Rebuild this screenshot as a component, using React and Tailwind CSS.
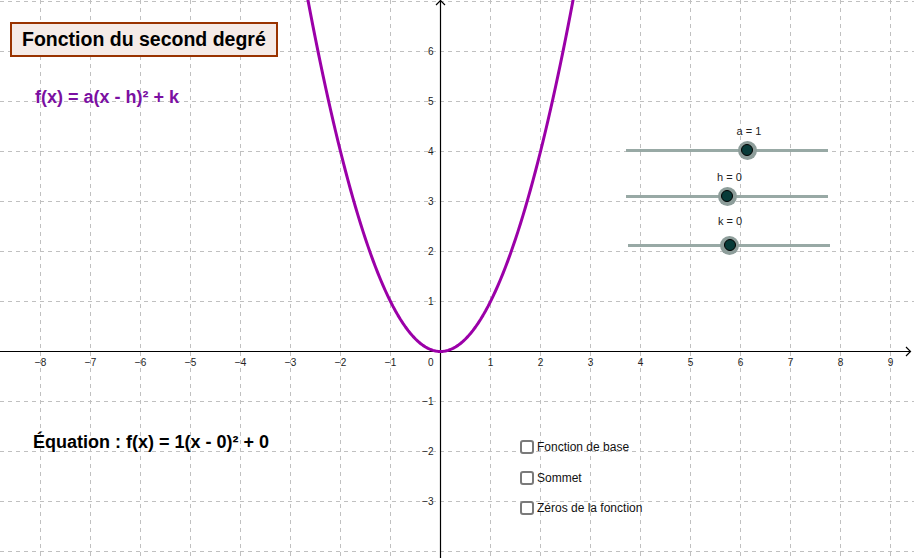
import React from "react";

const W = 914;
const H = 558;
const OX = 440.5;
const OY = 351.5;
const U = 50;

function curvePath() {
  const pts = [];
  for (let i = -56; i <= 56; i++) {
    const x = i * 0.05;
    const px = OX + U * x;
    const py = OY - U * x * x;
    pts.push(`${i === -56 ? "M" : "L"}${px.toFixed(2)},${py.toFixed(2)}`);
  }
  return pts.join(" ");
}

function Graph() {
  const vx = [];
  for (let k = -8; k <= 9; k++) if (k !== 0) vx.push(k);
  const hy = [];
  for (let k = -4; k <= 7; k++) if (k !== 0) hy.push(k);
  return (
    <svg
      width={W}
      height={H}
      viewBox={`0 0 ${W} ${H}`}
      className="absolute inset-0"
    >
      <g stroke="#c0c0c0" strokeWidth="1" strokeDasharray="4 4">
        {vx.map((k) => (
          <line key={"v" + k} x1={OX + U * k} y1="0" x2={OX + U * k} y2={H} />
        ))}
        {hy.map((k) => (
          <line key={"h" + k} x1="0" y1={OY - U * k} x2={W} y2={OY - U * k} />
        ))}
      </g>
      <g stroke="#000" strokeWidth="1.2" fill="none">
        <line x1="0" y1={OY} x2="910.5" y2={OY} />
        <line x1={OX} y1="0.5" x2={OX} y2={H} />
        <polyline points="906,347 910.5,351.5 906,356" />
        <polyline points="436,5 440.5,0.5 445,5" />
      </g>
      <g fontSize="10" fill="#222">
        {vx.map((k) => (
          <text key={"lx" + k} x={OX + U * k} y="365.5" textAnchor="middle">
            {k < 0 ? "\u2212" + Math.abs(k) : k}
          </text>
        ))}
        <text x="433.5" y="365.5" textAnchor="end">0</text>
        {hy
          .filter((k) => k >= -3 && k <= 6)
          .map((k) => (
            <text key={"ly" + k} x="433.5" y={OY - U * k + 3.5} textAnchor="end">
              {k < 0 ? "\u2212" + Math.abs(k) : k}
            </text>
          ))}
      </g>
      <path
        d={curvePath()}
        fill="none"
        stroke="#9b00a8"
        strokeWidth="3"
        strokeLinejoin="round"
      />
    </svg>
  );
}

function Knob() {
  return (
    <div className="w-[19px] h-[19px] rounded-full bg-[#8d9d9a] flex items-center justify-center">
      <div className="w-[12px] h-[12px] rounded-full bg-[#083b39] border border-black" />
    </div>
  );
}

function Slider({ label, className, labelClass, trackClass, knobClass }) {
  return (
    <div className={"flex flex-col " + className}>
      <div
        className={
          "w-[40px] text-center text-[11px] leading-none text-[#222] whitespace-nowrap " +
          labelClass
        }
      >
        {label}
      </div>
      <div className={"relative h-[19px] flex items-center " + trackClass}>
        <div className="w-[202px] h-[3px] bg-[#98a9a5]" />
        <div className={"absolute top-0 " + knobClass}>
          <Knob />
        </div>
      </div>
    </div>
  );
}

function Checkbox({ label }) {
  return (
    <div className="flex items-center gap-[3px]">
      <div className="w-[14px] h-[14px] rounded-[3px] border-2 border-[#7a7a7a] bg-white" />
      <span className="text-[12px] leading-none text-[#111] whitespace-nowrap">{label}</span>
    </div>
  );
}

export default function App() {
  return (
    <div className="relative w-[914px] h-[558px] overflow-hidden bg-white font-['Liberation_Sans',Arial,sans-serif]">
      <Graph />

      <div className="absolute left-[10px] top-[22px] w-[268px] h-[35px] border-2 border-[#993300] bg-[#f5ebe7] flex items-center pl-[10px]">
        <span className="text-[19.5px] leading-none font-bold text-black whitespace-nowrap">
          Fonction du second degré
        </span>
      </div>

      <div className="absolute left-[35px] top-[88px] text-[18px] leading-none font-bold text-[#7b10a2] whitespace-nowrap">
        f(x) = a(x - h)² + k
      </div>

      <div className="absolute left-[33px] top-[433px] text-[18px] leading-none font-bold text-black whitespace-nowrap">
        Équation : f(x) = 1(x - 0)² + 0
      </div>

      <div className="absolute left-[626px] top-[126px] flex flex-col">
        <Slider
          label="a = 1"
          className="gap-[3.5px]"
          labelClass="ml-[103px]"
          trackClass=""
          knobClass="left-[111.5px]"
        />
        <Slider
          label="h = 0"
          className="gap-[3.5px] mt-[12.5px]"
          labelClass="ml-[83.5px]"
          trackClass=""
          knobClass="left-[91.5px]"
        />
        <Slider
          label="k = 0"
          className="gap-[8.5px] mt-[10.5px]"
          labelClass="ml-[84px]"
          trackClass="ml-[2px]"
          knobClass="left-[92px]"
        />
      </div>

      <div className="absolute left-[520px] top-[440px] flex flex-col gap-[16.5px]">
        <Checkbox label="Fonction de base" />
        <Checkbox label="Sommet" />
        <Checkbox label="Zéros de la fonction" />
      </div>
    </div>
  );
}
